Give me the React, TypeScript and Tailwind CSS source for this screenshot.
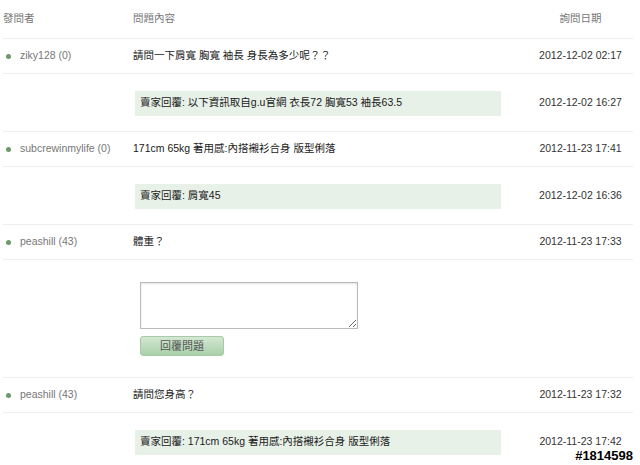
import React from "react";

type Row =
  | { kind: "q"; user: string; text: string; date: string }
  | { kind: "r"; text: string; date: string }
  | { kind: "form" };

const rows: Row[] = [
  { kind: "q", user: "ziky128 (0)", text: "請問一下肩寬 胸寬 袖長 身長為多少呢？？", date: "2012-12-02 02:17" },
  { kind: "r", text: "賣家回覆: 以下資訊取自g.u官網 衣長72 胸寬53 袖長63.5", date: "2012-12-02 16:27" },
  { kind: "q", user: "subcrewinmylife (0)", text: "171cm 65kg 著用感:內搭襯衫合身 版型俐落", date: "2012-11-23 17:41" },
  { kind: "r", text: "賣家回覆: 肩寬45", date: "2012-12-02 16:36" },
  { kind: "q", user: "peashill (43)", text: "體重？", date: "2012-11-23 17:33" },
  { kind: "form" },
  { kind: "q", user: "peashill (43)", text: "請問您身高？", date: "2012-11-23 17:32" },
  { kind: "r", text: "賣家回覆: 171cm 65kg 著用感:內搭襯衫合身 版型俐落", date: "2012-11-23 17:42" },
];

export default function App() {
  return (
    <div className="relative w-[640px] h-[465px] overflow-hidden bg-white text-[10.5px] font-['Liberation_Sans','Noto_Sans_CJK_TC',sans-serif]">
      <div className="ml-[3px] w-[630px]">
        <div className="flex h-[39px] items-center border-b border-[#eeeeee] text-[#777]">
          <div className="w-[130px]">發問者</div>
          <div className="flex-1">問題內容</div>
          <div className="w-[110px] pl-[5px] text-center whitespace-nowrap">詢問日期</div>
        </div>
        {rows.map((r, i) => {
          if (r.kind === "q") {
            return (
              <div key={i} className="flex h-[35px] items-center border-b border-[#eeeeee]">
                <div className="flex w-[130px] items-center whitespace-nowrap text-[#777]">
                  <span className="ml-[3px] mr-[9px] h-[5px] w-[5px] rounded-full bg-[#6a9a6a]" />
                  {r.user}
                </div>
                <div className="flex-1 text-[#1a1a1a]">{r.text}</div>
                <div className="w-[110px] pl-[5px] text-center whitespace-nowrap text-[#333]">{r.date}</div>
              </div>
            );
          }
          if (r.kind === "r") {
            return (
              <div key={i} className="flex h-[58px] items-center border-b border-[#eeeeee]">
                <div className="w-[130px]" />
                <div className="flex-1 pt-[1px]">
                  <div className="ml-[2px] flex h-[25px] w-[366px] items-center bg-[#e8f1e8] pl-[5px] text-[#1a1a1a]">
                    {r.text}
                  </div>
                </div>
                <div className="w-[110px] pl-[5px] text-center whitespace-nowrap text-[#333]">{r.date}</div>
              </div>
            );
          }
          return (
            <div key={i} className="flex h-[118px] flex-col border-b border-[#eeeeee] pl-[137px] pt-[22px]">
              <textarea className="h-[47px] w-[218px] resize-y border border-[#bbbbbb] bg-white shadow-[inset_0_1px_2px_rgba(0,0,0,0.12)] outline-none" />
              <button
                type="button"
                className="mt-[7px] h-[20px] w-[84px] rounded-[3px] border border-[#a9c9a9] bg-gradient-to-b from-[#d2e8d2] to-[#a9d0a9] text-[11px] text-[#555]"
              >
                回覆問題
              </button>
            </div>
          );
        })}
      </div>
      <div className="absolute bottom-[3px] right-[7px] text-[13px] font-bold leading-none text-black [text-shadow:1px_0_0_#fff,-1px_0_0_#fff,0_1px_0_#fff,0_-1px_0_#fff,1px_1px_0_#fff,-1px_-1px_0_#fff,1px_-1px_0_#fff,-1px_1px_0_#fff]">
        #1814598
      </div>
    </div>
  );
}
